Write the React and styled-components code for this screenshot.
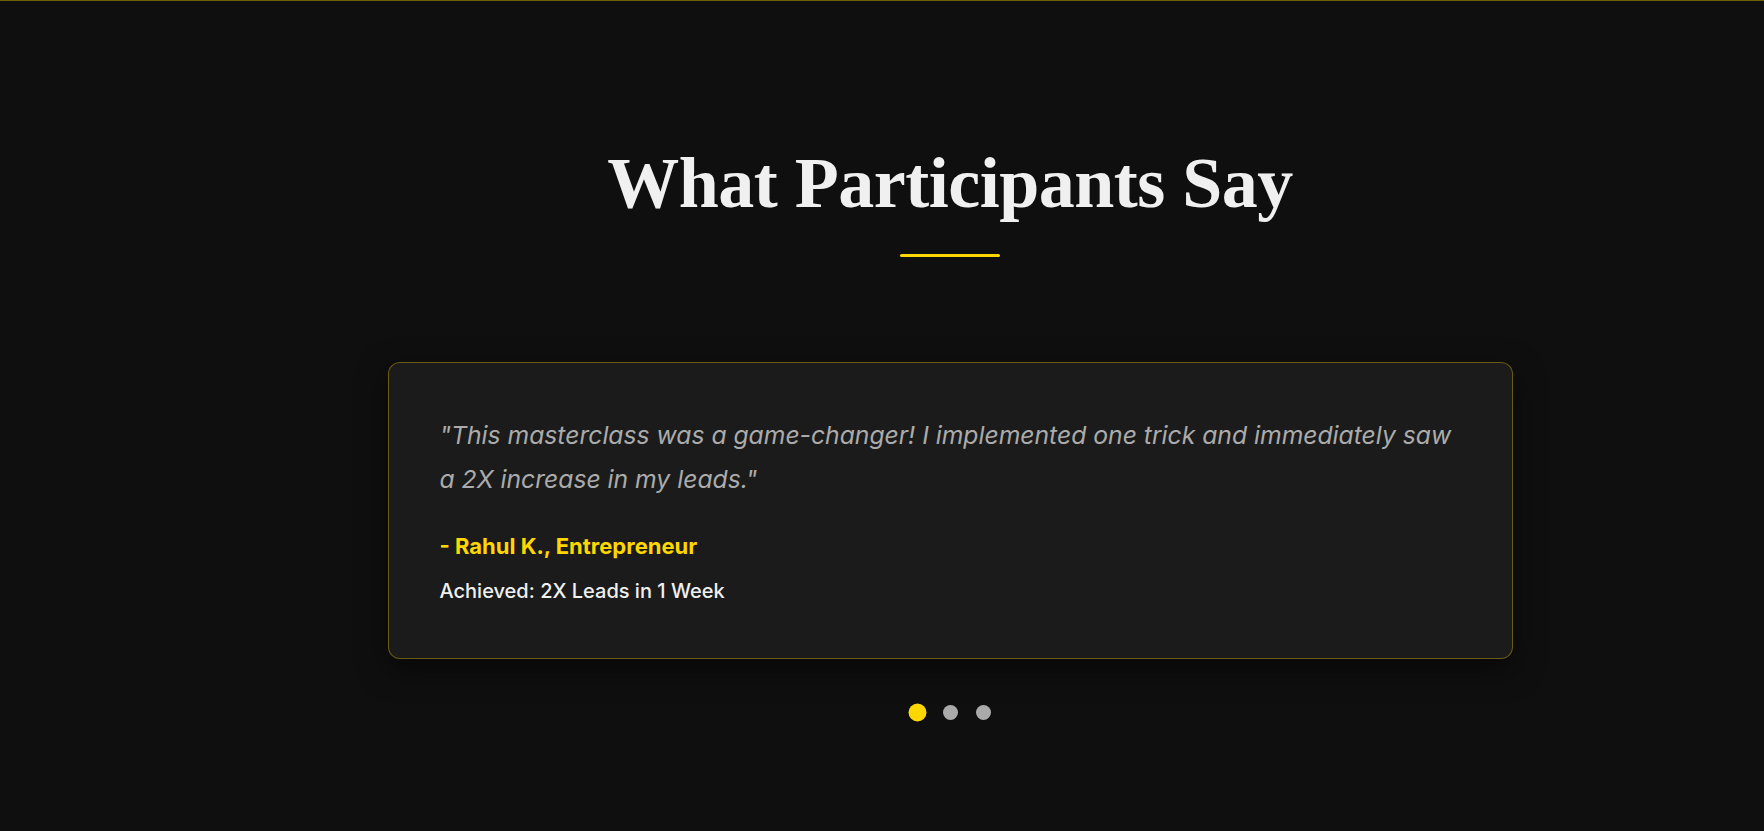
import React, { useState } from 'react';
import styled, { createGlobalStyle } from 'styled-components';

const GlobalStyle = createGlobalStyle`
  html, body {
    margin: 0;
    padding: 0;
    background: #0f0f0f;
  }
  body {
    font-family: Inter, "Noto Sans", sans-serif;
    color: #f0f0f0;
  }
`;

const Page = styled.div`
  min-height: 831px;
  box-sizing: border-box;
  border-top: 1px solid rgba(255, 215, 0, 0.4);
  background: #0f0f0f;
  padding-left: 136px;
`;

const Section = styled.section`
  display: flex;
  flex-direction: column;
  align-items: center;
  padding-top: 142px;
`;

const Title = styled.h2`
  margin: 0;
  font-family: "Liberation Serif", "Times New Roman", serif;
  font-weight: 700;
  font-size: 72px;
  line-height: 80px;
  letter-spacing: -0.5px;
  color: #f0f0f0;
`;

const Underline = styled.div`
  width: 100px;
  height: 3px;
  border-radius: 2px;
  background: #ffd700;
  margin-top: 31px;
`;

const Slider = styled.div`
  width: 100%;
  max-width: 1125px;
  margin-top: 105px;
`;

const Card = styled.div`
  box-sizing: border-box;
  background: #1b1b1b;
  border: 1px solid rgba(255, 215, 0, 0.35);
  border-radius: 12px;
  padding: 50px 51px 53px;
  box-shadow: 0 10px 30px rgba(0, 0, 0, 0.5);
`;

const Quote = styled.p`
  margin: 0 0 30px;
  font-size: 24.7px;
  font-style: italic;
  line-height: 44px;
  color: #ababab;
`;

const Author = styled.p`
  margin: 0 0 16px;
  font-size: 22px;
  font-weight: 700;
  line-height: 30px;
  color: #ffd700;
`;

const Result = styled.p`
  margin: 0;
  font-size: 20px;
  font-weight: 500;
  line-height: 28px;
  color: #f0f0f0;
`;

const Dots = styled.div`
  display: flex;
  justify-content: center;
  gap: 18px;
  margin-top: 46px;
`;

const Dot = styled.button`
  width: 15px;
  height: 15px;
  padding: 0;
  border: none;
  border-radius: 50%;
  cursor: pointer;
  background: ${({ $active }) => ($active ? '#ffd700' : '#aaaaaa')};
  transform: ${({ $active }) => ($active ? 'scale(1.2)' : 'none')};
`;

const testimonials = [
  {
    quote:
      '"This masterclass was a game-changer! I implemented one trick and immediately saw a 2X increase in my leads."',
    author: '- Rahul K., Entrepreneur',
    result: 'Achieved: 2X Leads in 1 Week',
  },
  {
    quote: '"Clear, practical and packed with ideas I could use the same day."',
    author: '- Priya S., Consultant',
    result: 'Achieved: 40% More Bookings',
  },
  {
    quote: '"The best hour I have spent on my business this year."',
    author: '- Arjun M., Coach',
    result: 'Achieved: First 10 Clients',
  },
];

const App = () => {
  const [current, setCurrent] = useState(0);
  const item = testimonials[current];

  return (
    <>
      <GlobalStyle />
      <Page>
        <Section>
          <Title>What Participants Say</Title>
          <Underline />
          <Slider>
            <Card>
              <Quote>{item.quote}</Quote>
              <Author>{item.author}</Author>
              <Result>{item.result}</Result>
            </Card>
          </Slider>
          <Dots>
            {testimonials.map((t, i) => (
              <Dot
                key={t.author}
                $active={i === current}
                onClick={() => setCurrent(i)}
                aria-label={`Testimonial ${i + 1}`}
              />
            ))}
          </Dots>
        </Section>
      </Page>
    </>
  );
};

export default App;
